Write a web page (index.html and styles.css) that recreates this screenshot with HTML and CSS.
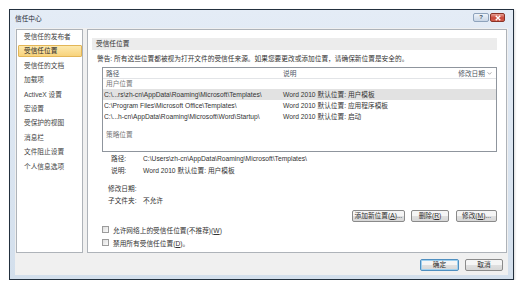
FILE: index.html
```html
<!DOCTYPE html>
<html lang="zh-CN">
<head>
<meta charset="utf-8">
<title>信任中心</title>
<link rel="stylesheet" href="styles.css">
</head>
<body>
<div class="window">
  <div class="titlebar">
    <span class="title">信任中心</span>
    <div class="caption-btns">
      <span class="cbtn help">?</span>
      <span class="cbtn close">
        <svg viewBox="0 0 10 8" width="8" height="6"><path d="M2 1 L8 7 M8 1 L2 7" stroke="#fff" stroke-width="1.8" fill="none"/></svg>
      </span>
    </div>
  </div>
  <div class="client">
    <div class="main">
      <ul class="nav">
        <li>受信任的发布者</li>
        <li class="sel">受信任位置</li>
        <li>受信任的文档</li>
        <li>加载项</li>
        <li>ActiveX 设置</li>
        <li>宏设置</li>
        <li>受保护的视图</li>
        <li>消息栏</li>
        <li>文件阻止设置</li>
        <li>个人信息选项</li>
      </ul>
      <div class="pane">
        <div class="band">受信任位置</div>
        <div class="warn">警告: 所有这些位置都被视为打开文件的受信任来源。如果您要更改或添加位置，请确保新位置是安全的。</div>
        <div class="list">
          <div class="lhead">
            <span class="c1">路径</span>
            <span class="c2">说明</span>
            <span class="c3">修改日期 <svg viewBox="0 0 6 4" width="5" height="3"><path d="M0.5 0.5 L3 3 L5.5 0.5" stroke="#8a8a8a" fill="none"/></svg></span>
          </div>
          <div class="group">用户位置</div>
          <div class="row sel"><span class="c1">C:\...rs\zh-cn\AppData\Roaming\Microsoft\Templates\</span><span class="c2">Word 2010 默认位置: 用户模板</span></div>
          <div class="row"><span class="c1">C:\Program Files\Microsoft Office\Templates\</span><span class="c2">Word 2010 默认位置: 应用程序模板</span></div>
          <div class="row"><span class="c1">C:\...h-cn\AppData\Roaming\Microsoft\Word\Startup\</span><span class="c2">Word 2010 默认位置: 启动</span></div>
          <div class="group policy">策略位置</div>
        </div>
        <div class="details">
          <div class="drow"><span class="dl">路径:</span><span>C:\Users\zh-cn\AppData\Roaming\Microsoft\Templates\</span></div>
          <div class="drow"><span class="dl">说明:</span><span>Word 2010 默认位置: 用户模板</span></div>
          <div class="drow wide gap"><span class="dl">修改日期:</span><span></span></div>
          <div class="drow wide"><span class="dl">子文件夹:</span><span>不允许</span></div>
        </div>
        <div class="actions">
          <span class="btn b-add">添加新位置(<u>A</u>)...</span>
          <span class="btn b-del">删除(<u>R</u>)</span>
          <span class="btn b-mod">修改(<u>M</u>)...</span>
        </div>
        <div class="check first"><span class="box"></span><span>允许网络上的受信任位置(不推荐)(<u>W</u>)</span></div>
        <div class="check"><span class="box"></span><span>禁用所有受信任位置(<u>D</u>)。</span></div>
      </div>
    </div>
    <div class="footer">
      <span class="btn b-ok">确定</span>
      <span class="btn b-cancel">取消</span>
    </div>
  </div>
</div>
</body>
</html>
```

FILE: styles.css
```css
* { box-sizing: border-box; }
html, body { margin: 0; padding: 0; }
body {
  background: #ffffff;
  font-family: "Liberation Sans", "Noto Sans CJK SC", sans-serif;
  font-size: 6.7px;
  color: #333333;
}
.window {
  margin: 9px 0 0 9px;
  width: 505px;
  height: 271px;
  border: 1px solid #23303e;
  background: linear-gradient(#e4ecf6, #d3dfec);
  display: flex;
  flex-direction: column;
  box-shadow: 1px 1px 2px rgba(0,0,0,0.15);
}
.titlebar {
  height: 18px;
  display: flex;
  align-items: flex-start;
  padding: 0 8px 0 5px;
}
.title {
  line-height: 18px;
  color: #1f2a36;
  flex: 1;
}
.caption-btns {
  display: flex;
  gap: 1px;
  margin-top: 3px;
}
.cbtn {
  height: 9px;
  border-radius: 2px;
  display: flex;
  align-items: center;
  justify-content: center;
}
.cbtn.help {
  width: 16px;
  border: 1px solid #8ea3bc;
  background: linear-gradient(#eef3f9, #c9d6e6);
  color: #3a4a5e;
  font-size: 6px;
  font-weight: bold;
  line-height: 7px;
}
.cbtn.close {
  width: 15px;
  border: 1px solid #8a3327;
  background: linear-gradient(#e9a194, #c9473a 55%, #d4604f);
}
.client {
  flex: 1;
  margin: 0 5px 4px 5px;
  background: #f0f0f0;
  display: flex;
  flex-direction: column;
}
.main {
  height: 225px;
  display: flex;
  padding: 1px 0 0 1px;
}
.nav {
  list-style: none;
  margin: 0;
  padding: 1px 0 0 0;
  width: 67px;
  background: #fff;
  border: 1px solid #aeb3b9;
}
.nav li {
  height: 12px;
  line-height: 12px;
  margin: 0 0 2.4px 1px;
  padding-left: 6px;
  color: #444444;
  white-space: nowrap;
}
.nav li.sel {
  background: linear-gradient(#fde9ae, #f8d37c);
  border: 1px solid #e3b657;
  border-radius: 1px;
  padding-left: 5px;
  line-height: 10px;
  color: #2a2a2a;
}
.pane {
  flex: 1;
  margin: 0 1px 0 4px;
  background: #fff;
  border: 1px solid #aeb3b9;
  display: flex;
  flex-direction: column;
}
.band {
  margin: 8px 9px 0 4px;
  height: 12px;
  line-height: 12px;
  padding-left: 4px;
  background: #ececec;
  color: #333;
}
.warn {
  margin: 4px 0 0 9px;
  height: 10px;
  line-height: 10px;
  white-space: nowrap;
}
.list {
  margin: 3px 9px 0 14px;
  height: 85px;
  border: 1px solid #8f959d;
}
.lhead {
  height: 11px;
  display: flex;
  align-items: center;
  border-bottom: 1px solid #e2e4e7;
  padding: 0 4px 0 3px;
  color: #4d5662;
}
.lhead .c1 { width: 177px; }
.lhead .c2 { flex: 1; }
.lhead .c3 { display: flex; align-items: center; gap: 2px; }
.group {
  height: 10px;
  line-height: 10px;
  padding-left: 3px;
  color: #777777;
}
.group.policy { margin-top: 8px; }
.row {
  height: 11px;
  line-height: 11px;
  display: flex;
  padding-left: 1px;
  white-space: nowrap;
}
.row.sel { background: #e2e2e2; }
.row .c1 { width: 179px; overflow: hidden; }
.row .c2 { flex: 1; }
.details {
  margin: 1px 0 0 0;
}
.drow {
  height: 12px;
  line-height: 12px;
  display: flex;
  padding-left: 23px;
  white-space: nowrap;
}
.drow .dl { width: 32px; }
.drow.wide { padding-left: 20px; }
.drow.wide .dl { width: 35px; }
.drow.gap { margin-top: 6px; }
.actions {
  margin: 3px 9px 0 0;
  display: flex;
  justify-content: flex-end;
  gap: 6px;
}
.btn {
  height: 12px;
  line-height: 10px;
  border: 1px solid #8a8a8a;
  border-radius: 2px;
  background: linear-gradient(#f5f5f5 45%, #e0e0e0 50%, #d7d7d7);
  text-align: center;
  color: #2e2e2e;
  display: inline-block;
  white-space: nowrap;
}
.b-add { width: 53px; }
.b-del { width: 38px; }
.b-mod { width: 41px; margin-left: 1px; }
.check {
  height: 13px;
  display: flex;
  align-items: center;
  padding-left: 14px;
  white-space: nowrap;
}
.check.first { margin-top: 1px; }
.box {
  width: 7px;
  height: 7px;
  border: 1px solid #9c9c9c;
  background: linear-gradient(135deg, #dedede, #fbfbfb);
  margin-right: 4px;
}
.footer {
  flex: 1;
  display: flex;
  justify-content: flex-end;
  gap: 6px;
  padding: 6px 5px 0 0;
}
.b-ok { width: 39px; border-color: #4f8fc0; box-shadow: inset 0 0 0 1px #9fd0ef; }
.b-cancel { width: 38px; }
u { text-decoration: underline; text-underline-offset: 1px; }
```
